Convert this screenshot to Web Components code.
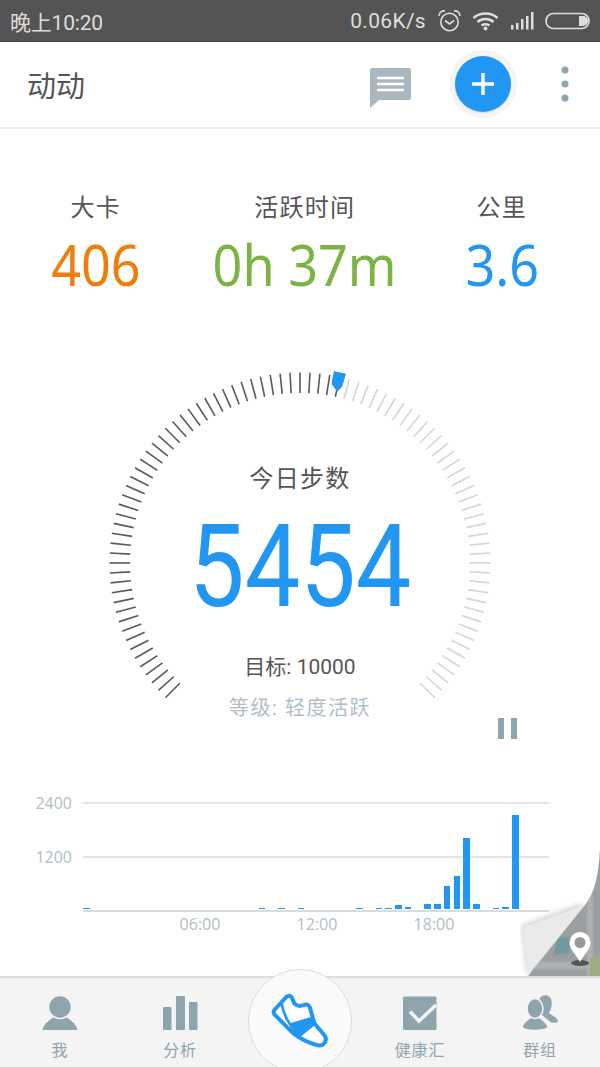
<!DOCTYPE html>
<html lang="zh">
<head>
<meta charset="utf-8">
<title>动动</title>
<style>
	html, body {
		margin: 0;
		padding: 0;
		background: #fff;
		font-family: Roboto, "Noto Sans CJK SC", sans-serif;
	}
	app-page {
		width: 600px;
		height: 1067px;
	}
</style>
</head>
<body>
<app-page>
	<status-bar></status-bar>
	<app-header title="动动"></app-header>
	<main-view>
		<stat-row>
			<stat-item label="大卡" value="406" color="#ef7d0b" style="width:190px"></stat-item>
			<stat-item label="活跃时间" value="0h 37m" color="#7cb342" style="width:228px"></stat-item>
			<stat-item label="公里" value="3.6" color="#2196f3" style="width:166px"></stat-item>
		</stat-row>
		<step-gauge steps="5454" goal="10000" level="轻度活跃"></step-gauge>
		<bar-chart></bar-chart>
		<page-curl></page-curl>
	</main-view>
	<tab-bar>
		<tab-item label="我">
			<svg width="36" height="36" viewBox="0 0 36 36"><path d="M0.500 35 C2 28 8 25 13 21 H23 C28 25 34 28 35.500 35 Z"/><circle cx="18" cy="12" r="11.500" stroke="#f4f4f4" stroke-width="1.600"/></svg>
		</tab-item>
		<tab-item label="分析">
			<svg width="36" height="36" viewBox="0 0 36 36"><rect x="1" y="12" width="8.500" height="23" rx="1"/><rect x="14" y="1" width="9" height="34" rx="1"/><rect x="27" y="7" width="8.500" height="28" rx="1"/></svg>
		</tab-item>
		<shoe-tab></shoe-tab>
		<tab-item label="健康汇">
			<svg width="36" height="36" viewBox="0 0 36 36"><rect x="1" y="1.500" width="33.500" height="33.500" rx="1.500"/><path d="M8 16.500 L17 26 L34 10" fill="none" stroke="#f4f4f4" stroke-width="3.500"/></svg>
		</tab-item>
		<tab-item label="群组">
			<svg width="36" height="36" viewBox="0 0 36 36"><path d="M17 5 C18 1 22 -0.500 25 0.500 C29 1.500 30.500 6 29.500 11 C29 14 28 16 27 18 C30 20.500 35 22 36 26 C36 28 32 28 29 27.500 L20 20 Z"/><g stroke="#f4f4f4" stroke-width="1.500"><path d="M0 32 C1 27 6 25 9 22 H17 C20 25 25 27 26 32 C25 36.500 2 36.500 0 32 Z"/><ellipse cx="13" cy="13.500" rx="8" ry="10"/></g></svg>
		</tab-item>
	</tab-bar>
</app-page>

<script>
class AppPage extends HTMLElement {
	connectedCallback() {
		const shadow = this.attachShadow({ mode: "open" });
		shadow.innerHTML = `
			<style>
				:host {
					display: flex;
					flex-direction: column;
					overflow: hidden;
					background: #fff;
				}
			</style>
			<slot></slot>
		`;
	}
}
customElements.define("app-page", AppPage);

class StatusBar extends HTMLElement {
	connectedCallback() {
		const shadow = this.attachShadow({ mode: "open" });
		shadow.innerHTML = `
			<style>
				:host {
					display: flex;
					align-items: center;
					box-sizing: border-box;
					height: 42px;
					padding: 0 10px;
					background: #545454;
					border-bottom: 1px solid #444;
					color: #dedede;
					font: 21px Roboto, "Noto Sans CJK SC", sans-serif;
				}
				.time { flex: 1; letter-spacing: -0.2px; }
				svg { display: block; fill: none; stroke: #dedede; }
				.speed { margin-right: 11px; letter-spacing: 0.3px; }
				.alarm { margin-right: 10px; }
				.wifi { margin-right: 11px; }
				.signal { margin-right: 10px; }
			</style>
			<span class="time">晚上10:20</span>
			<span class="speed">0.06K/s</span>
			<svg class="alarm" width="25" height="24" viewBox="0 0 25 24" stroke-width="1.600">
				<circle cx="12.500" cy="13" r="8.700"/>
				<path d="M8 11.500 L12.500 15 L17 11.500"/>
				<path d="M2 7 C2 3 5 1.500 8 2 M23 7 C23 3 20 1.500 17 2"/>
			</svg>
			<svg class="wifi" width="27" height="20" viewBox="0 0 27 20" stroke-width="2.500">
				<path d="M1.500 7 C8 1 19 1 25.500 7 M5.500 11 C10 7 17 7 21.500 11 M9.500 14.500 C12 13 15 13 17.500 14.500"/>
				<circle cx="13.500" cy="17.500" r="2" fill="#dedede" stroke="none"/>
			</svg>
			<svg class="signal" width="25" height="20" viewBox="0 0 25 20">
				<g fill="#dedede" stroke="none">
					<rect x="1" y="14" width="2.500" height="4.500"/>
					<rect x="6" y="12" width="2.500" height="6.500"/>
					<rect x="11" y="8" width="2.500" height="10.500"/>
					<rect x="16" y="5" width="2.500" height="13.500"/>
					<rect x="21" y="1" width="2.500" height="17.500"/>
				</g>
			</svg>
			<svg width="45" height="18" viewBox="0 0 45 18" stroke-width="1.700">
				<rect x="1" y="1.500" width="43" height="15" rx="7.500"/>
				<path d="M34 4 H38 A5 5 0 0 1 38 14 H34 Z" fill="#dedede" stroke="none"/>
			</svg>
		`;
	}
}
customElements.define("status-bar", StatusBar);

class AppHeader extends HTMLElement {
	connectedCallback() {
		const shadow = this.attachShadow({ mode: "open" });
		shadow.innerHTML = `
			<style>
				:host {
					display: flex;
					align-items: center;
					box-sizing: border-box;
					height: 87px;
					padding: 0 31px 2px 27px;
					background: #fff;
					border-bottom: 2px solid #eeeeee;
				}
				h1 {
					flex: 1;
					margin: 0;
					font: 400 29px "Noto Sans CJK SC", sans-serif;
					color: #555;
				}
				svg { display: block; }
				.msg { margin: 8px 38px 0 0; }
				.halo {
					display: flex;
					align-items: center;
					justify-content: center;
					width: 68px;
					height: 68px;
					margin-right: 44px;
					border-radius: 50%;
					background: #f5f5f5;
				}
				.add {
					display: flex;
					align-items: center;
					justify-content: center;
					width: 56px;
					height: 56px;
					border-radius: 50%;
					background: #2196f3;
					box-shadow: 0 1px 2px rgba(0, 0, 0, 0.12);
				}
			</style>
			<h1>${this.getAttribute("title")}</h1>
			<svg class="msg" width="41" height="40" viewBox="0 0 41 40">
				<path d="M2 0 H39 Q41 0 41 2 V30 Q41 32 39 32 H9 L0 40 V2 Q0 0 2 0 Z" fill="#aab7be"/>
				<path d="M7 10 H34 M7 16 H34 M7 22 H34" stroke="#fff" stroke-width="2.400"/>
			</svg>
			<div class="halo">
				<div class="add">
					<svg width="24" height="24" viewBox="0 0 24 24"><path d="M12 1 V23 M1 12 H23" stroke="#fff" stroke-width="3.400"/></svg>
				</div>
			</div>
			<svg width="8" height="36" viewBox="0 0 8 36" fill="#90a4ae">
				<circle cx="4" cy="4" r="3.500"/><circle cx="4" cy="18" r="3.500"/><circle cx="4" cy="32" r="3.500"/>
			</svg>
		`;
	}
}
customElements.define("app-header", AppHeader);

class MainView extends HTMLElement {
	connectedCallback() {
		const shadow = this.attachShadow({ mode: "open" });
		shadow.innerHTML = `
			<style>
				:host {
					display: block;
					position: relative;
					flex: 1;
					min-height: 0;
				}
			</style>
			<slot></slot>
		`;
	}
}
customElements.define("main-view", MainView);

class StatRow extends HTMLElement {
	connectedCallback() {
		const shadow = this.attachShadow({ mode: "open" });
		shadow.innerHTML = `
			<style>
				:host {
					display: flex;
					box-sizing: border-box;
					height: 231px;
					padding-top: 60px;
				}
			</style>
			<slot></slot>
		`;
	}
}
customElements.define("stat-row", StatRow);

class StatItem extends HTMLElement {
	connectedCallback() {
		const shadow = this.attachShadow({ mode: "open" });
		shadow.innerHTML = `
			<style>
				:host {
					display: flex;
					flex-direction: column;
					align-items: center;
				}
				.label {
					padding-left: 1.500px;
					font: 24px/34px "Noto Sans CJK SC", sans-serif;
					letter-spacing: 1.200px;
					color: #555;
				}
				.value {
					display: inline-block;
					margin: 8px 0 0 2px;
					font: 57px/66px "Noto Sans", sans-serif;
					white-space: nowrap;
					transform: scaleX(0.915);
					color: ${this.getAttribute("color")};
				}
			</style>
			<span class="label">${this.getAttribute("label")}</span>
			<span class="value">${this.getAttribute("value")}</span>
		`;
	}
}
customElements.define("stat-item", StatItem);

class StepGauge extends HTMLElement {
	connectedCallback() {
		const shadow = this.attachShadow({ mode: "open" });
		const steps = Number(this.getAttribute("steps"));
		const goal = Number(this.getAttribute("goal"));

		// 91 ticks over 270deg, starting bottom left
		let ticks = "";
		for (let i = 0; i <= 90; i++) {
			const deg = -135 + i * 3;
			const color = deg <= 12 ? "#5a5a5a" : "#d6d6d6";
			ticks += `<line x1="0" y1="-170" x2="0" y2="-190.500" stroke="${color}" stroke-width="1.600" transform="rotate(${deg})"/>`;
		}

		shadow.innerHTML = `
			<style>
				:host {
					display: grid;
					justify-items: center;
				}
				svg.dial, .body { grid-area: 1 / 1; }
				svg.dial { display: block; }
				.body {
					display: flex;
					flex-direction: column;
					align-items: center;
					width: 100%;
					padding-top: 100px;
					color: #555;
				}
				.title {
					font: 24px/34px "Noto Sans CJK SC", sans-serif;
					letter-spacing: 1.300px;
				}
				.steps {
					margin-top: 23px;
					font: 115px/100px Roboto, sans-serif;
					color: #2196f3;
					transform: scaleX(0.86);
				}
				.goal {
					margin-top: 35px;
					font: 21px/30px Roboto, "Noto Sans CJK SC", sans-serif;
				}
				.level {
					margin-top: 11px;
					font: 20px/30px Roboto, "Noto Sans CJK SC", sans-serif;
					letter-spacing: 1.500px;
					color: #b0bec5;
				}
				.pause {
					display: flex;
					align-self: flex-end;
					gap: 7px;
					margin: -5px 83px 0 0;
				}
				.pause i {
					width: 6px;
					height: 21px;
					background: #90a4ae;
				}
			</style>
			<svg class="dial" width="400" height="340" viewBox="-200 -203 400 340">
				${ticks}
				<path d="M34.300 -191.300 L45.300 -189 L41.700 -176.300 L37.300 -172 L32 -179 Z" fill="#2196f3" stroke="#2196f3" stroke-width="1" stroke-linejoin="round"/>
			</svg>
			<div class="body">
				<span class="title">今日步数</span>
				<span class="steps">${steps}</span>
				<span class="goal">目标: ${goal}</span>
				<span class="level">等级: ${this.getAttribute("level")}</span>
				<div class="pause"><i></i><i></i></div>
			</div>
		`;
	}
}
customElements.define("step-gauge", StepGauge);

class BarChart extends HTMLElement {
	connectedCallback() {
		const shadow = this.attachShadow({ mode: "open" });
		// half hour slot -> height in px
		const data = { 0: 1.5, 18: 1.5, 20: 1.5, 22: 1.5, 28: 1.5, 30: 1.5, 31: 1.5, 32: 4, 33: 2.5, 35: 5, 36: 5, 37: 23, 38: 33, 39: 71, 40: 5, 42: 1.5, 43: 2.5, 44: 94 };
		let bars = "";
		for (let i = 0; i < 48; i++) {
			bars += `<i style="height:${data[i] || 0}px"></i>`;
		}

		shadow.innerHTML = `
			<style>
				:host {
					display: block;
					margin-top: 63px;
					color: #b0bec5;
					font: 16px "Open Sans", sans-serif;
				}
				.plot { display: grid; }
				.lines, .bars { grid-area: 1 / 1; }
				.lines {
					display: flex;
					flex-direction: column;
					gap: 52px;
				}
				.row {
					display: flex;
					align-items: center;
					height: 2px;
				}
				.row span {
					width: 72px;
					margin-right: 11px;
					text-align: right;
				}
				.row b {
					width: 466px;
					height: 2px;
					background: #e3e6e8;
				}
				.row.base b { background: #d9dcde; }
				.bars {
					display: grid;
					grid-template-columns: repeat(48, 9.75px);
					align-items: end;
					margin-left: 82px;
					height: 107px;
				}
				.bars i {
					display: block;
					width: 6.5px;
					margin-left: 1px;
					background: #2196f3;
				}
				.ticks {
					display: grid;
					grid-template-columns: repeat(3, 117px);
					margin: 1px 0 0 141.500px;
					text-align: center;
					line-height: 22px;
				}
			</style>
			<div class="plot">
				<div class="lines">
					<div class="row"><span>2400</span><b></b></div>
					<div class="row"><span>1200</span><b></b></div>
					<div class="row base"><span></span><b></b></div>
				</div>
				<div class="bars">${bars}</div>
			</div>
			<div class="ticks"><span>06:00</span><span>12:00</span><span>18:00</span></div>
		`;
	}
}
customElements.define("bar-chart", BarChart);

class PageCurl extends HTMLElement {
	connectedCallback() {
		const shadow = this.attachShadow({ mode: "open" });
		shadow.innerHTML = `
			<style>
				:host {
					position: absolute;
					right: 0;
					bottom: 0;
					width: 80px;
					height: 131px;
				}
				svg { display: block; overflow: hidden; }
			</style>
			<svg width="80" height="131" viewBox="0 0 80 131">
				<defs>
					<clipPath id="fold"><path d="M80 3 C79 28 75 48 65 60 L8 131 H80 Z"/></clipPath>
					<filter id="blur" x="-30%" y="-30%" width="160%" height="160%"><feGaussianBlur stdDeviation="3"/></filter>
					<filter id="soft" x="-30%" y="-30%" width="160%" height="160%"><feGaussianBlur stdDeviation="1.200"/></filter>
				</defs>
				<path d="M2 81 L65 58 L8 131 Z" fill="#000" opacity="0.22" filter="url(#blur)"/>
				<path d="M3 82 L65 60 L8 129 Z" fill="#eaeaea"/>
				<g clip-path="url(#fold)">
					<rect width="80" height="131" fill="#9c9fa2"/>
					<path d="M67 50 H73 V131 H67 Z" fill="#aeb1b3" filter="url(#soft)"/>
					<path d="M0 117 H80 V124 H0 Z" fill="#aeb1b3" filter="url(#soft)"/>
					<path d="M38 92 L49 92 L50 108 L34 110 Z" fill="#6f9a9c" filter="url(#soft)"/>
					<rect x="70" y="112" width="12" height="22" rx="3" fill="#9cae80"/>
				</g>
				<ellipse cx="60" cy="118" rx="9" ry="3" fill="#555"/>
				<path d="M60 117 C56 109 49.500 105 49.500 97.500 A10.500 10.500 0 0 1 70.500 97.500 C70.500 105 64 109 60 117 Z" fill="#fff"/>
				<circle cx="60" cy="97.500" r="5.500" fill="#999"/>
			</svg>
		`;
	}
}
customElements.define("page-curl", PageCurl);

class TabBar extends HTMLElement {
	connectedCallback() {
		const shadow = this.attachShadow({ mode: "open" });
		shadow.innerHTML = `
			<style>
				:host {
					display: grid;
					grid-template-columns: repeat(5, 120px);
					box-sizing: border-box;
					height: 91px;
					background: #f4f4f4;
					border-top: 2px solid #dedede;
				}
			</style>
			<slot></slot>
		`;
	}
}
customElements.define("tab-bar", TabBar);

class TabItem extends HTMLElement {
	connectedCallback() {
		const shadow = this.attachShadow({ mode: "open" });
		shadow.innerHTML = `
			<style>
				:host {
					display: flex;
					flex-direction: column;
					align-items: center;
					padding-top: 17px;
					fill: #90a4ae;
					color: #90a4ae;
				}
				.icon { height: 36px; }
				.label {
					margin-top: 7px;
					font: 16px/22px "Noto Sans CJK SC", sans-serif;
					letter-spacing: 0.8px;
				}
			</style>
			<div class="icon"><slot></slot></div>
			<span class="label">${this.getAttribute("label")}</span>
		`;
	}
}
customElements.define("tab-item", TabItem);

class ShoeTab extends HTMLElement {
	connectedCallback() {
		const shadow = this.attachShadow({ mode: "open" });
		shadow.innerHTML = `
			<style>
				:host {
					display: flex;
					justify-content: center;
					position: relative;
					margin-top: -9px;
				}
				.disc {
					box-sizing: border-box;
					flex: none;
					width: 104px;
					height: 104px;
					border-radius: 50%;
					background: #fafafa;
					border: 1px solid #dddddd;
				}
				svg { display: block; }
			</style>
			<div class="disc">
				<svg width="102" height="102" viewBox="12 15 306 306">
					<path d="M88 135 L125 95 Q133 88 140 97 L148 115 Q158 125 170 122 L185 118 Q192 120 195 128 L208 175 L240 213 Q247 228 235 238 Q228 243 215 240 C185 232 165 220 145 205 L92 152 Q82 143 88 135 Z" fill="#fff" stroke="#2196f3" stroke-width="12" stroke-linejoin="round"/>
					<path d="M130 176 L200 155 L210 180 L166 216 C150 208 140 195 130 176 Z" fill="#2196f3"/>
					<path d="M110 113 C112 135 120 155 134 176" fill="none" stroke="#2196f3" stroke-width="8"/>
				</svg>
			</div>
		`;
	}
}
customElements.define("shoe-tab", ShoeTab);
</script>
</body>
</html>
